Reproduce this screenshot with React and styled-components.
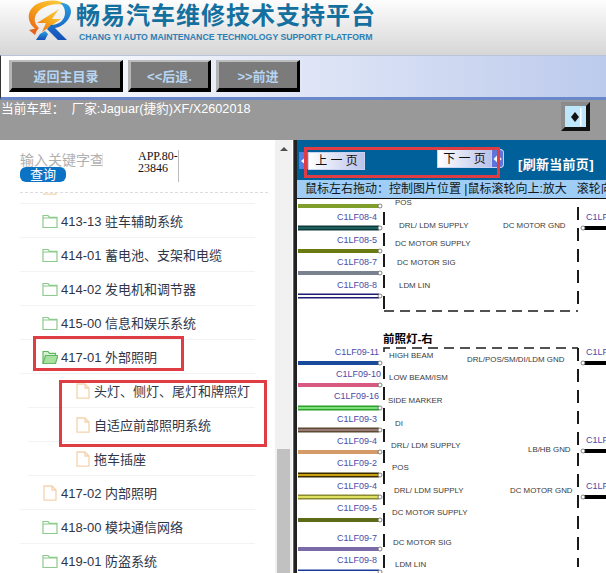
import React from "react";
import styled, { createGlobalStyle } from "styled-components";

const GlobalStyle = createGlobalStyle`
  html, body { margin: 0; padding: 0; background: #fff; }
  body { font-family: "Liberation Sans", "Noto Sans CJK SC", sans-serif; }
`;

const Page = styled.div`
  position: relative;
  width: 606px;
  height: 573px;
  overflow: hidden;
  display: flex;
  flex-direction: column;
`;

const Header = styled.header`
  height: 55px;
  box-sizing: border-box;
  display: flex;
  gap: 4px;
  padding: 0 0 0 24px;
  background: linear-gradient(#fdfdfd, #d6d6d6);
`;

const TitleBlock = styled.div`
  display: flex;
  flex-direction: column;
  padding-top: 1px;
`;

const Title = styled.div`
  color: #14709f;
  font-size: 24px;
  line-height: 30px;
  font-weight: 700;
  letter-spacing: 1px;
  white-space: nowrap;
`;

const SubTitle = styled.div`
  margin: 0 0 0 3px;
  color: #2c7fb5;
  font-size: 8.7px;
  line-height: 12px;
  font-weight: 700;
  white-space: nowrap;
`;

const Toolbar = styled.nav`
  height: 45px;
  box-sizing: border-box;
  display: flex;
  gap: 5px;
  padding: 4px 0 0 8px;
  background: linear-gradient(90deg, #fff 0%, #e6ebf8 40%, #bccaec 100%);
  border-left: 1px solid #333;
  border-top: 1px solid #b9c4dc;
  border-bottom: 3px solid #6a87c9;
`;

const ToolButton = styled.button`
  width: ${(p) => p.$w}px;
  height: 32px;
  box-sizing: border-box;
  padding: 0;
  background: #7b7b7b;
  border-style: solid;
  border-width: 2px 3px 4px 3px;
  border-color: #bdbdbd #000 #000 #b5b5b5;
  color: #b7d5f2;
  font-family: inherit;
  font-size: 13px;
  font-weight: 700;
`;

const ModelBar = styled.div`
  height: 40px;
  box-sizing: border-box;
  display: flex;
  justify-content: space-between;
  align-items: flex-start;
  padding: 2px 16px 0 1px;
  background: #999;
  color: #fff;
  font-size: 12.7px;
  line-height: 14px;
  white-space: pre;
`;

const ToggleButton = styled.button`
  width: 29px;
  height: 29px;
  box-sizing: border-box;
  display: flex;
  align-items: center;
  justify-content: center;
  padding: 0;
  background: #bde6fa;
  border-style: solid;
  border-width: 4px;
  border-color: #8b8b8b #111 #111 #8b8b8b;
`;

const Main = styled.div`
  flex: 1;
  min-height: 0;
  display: flex;
`;

const Sidebar = styled.aside`
  width: 275px;
  background: #fff;
  display: flex;
  flex-direction: column;
`;

const SearchRow = styled.div`
  height: 52px;
  box-sizing: border-box;
  flex: none;
  display: flex;
  padding: 10px 0 0 20px;
`;

const SearchColumn = styled.div`
  width: 83px;
  display: flex;
  flex-direction: column;
  padding-top: 3px;
`;

const SearchInput = styled.input`
  width: 83px;
  height: 14px;
  box-sizing: border-box;
  padding: 0;
  border: 0;
  border-right: 1px solid #e6e6e6;
  outline: none;
  font-family: inherit;
  font-size: 14px;
  line-height: 14px;
  &::placeholder { color: #b0b0b0; opacity: 1; }
`;

const SearchButton = styled.button`
  width: 46px;
  height: 15px;
  padding: 0;
  border: 0;
  border-radius: 6px;
  background: #0b72c4;
  color: #fff;
  font-family: inherit;
  font-size: 13px;
  line-height: 15px;
`;

const AppCode = styled.div`
  width: 40px;
  height: 32px;
  margin-left: 35px;
  border-right: 1px solid #bbb;
  color: #111;
  font-family: "Liberation Serif", serif;
  font-size: 12px;
  line-height: 12px;
`;

const TreeFrame = styled.div`
  flex: 1;
  min-height: 0;
  overflow: hidden;
  border-top: 1px dashed #dcdcdc;
  margin-left: 20px;
  margin-right: 7px;
`;

const Tree = styled.ul`
  list-style: none;
  margin: -23px 0 0 0;
  padding: 0;
  width: 235px;
`;

const TreeRow = styled.li`
  height: 34px;
  box-sizing: border-box;
  display: flex;
  align-items: center;
  gap: 3px;
  margin-left: ${(p) => (p.$child ? 8 : 0)}px;
  padding-left: ${(p) => (p.$child ? 47 : 22)}px;
  border-bottom: 1px solid #f2f3f4;
  color: #2f3648;
  font-size: 13px;
  white-space: pre;
`;

const TreeGlyph = styled.svg`
  width: 16px;
  height: 16px;
  flex: none;
`;

const Scrollbar = styled.div`
  width: 17px;
  background: #f1f1f1;
  display: flex;
  flex-direction: column;
  align-items: center;
`;

const ScrollArrow = styled.div`
  margin-top: 7px;
  width: 0;
  height: 0;
  border-left: 4px solid transparent;
  border-right: 4px solid transparent;
  border-bottom: 4px solid #505050;
`;

const ScrollThumb = styled.div`
  margin-top: auto;
  width: 13px;
  height: 124px;
  background: #c1c1c1;
`;

const Splitter = styled.div`
  width: 4px;
  margin-left: 1px;
  background: #222;
  border-left: 1px solid #666;
  box-sizing: border-box;
`;

const Viewer = styled.section`
  flex: 1;
  min-width: 0;
  display: flex;
  flex-direction: column;
`;

const PagerBar = styled.div`
  position: relative;
  height: 40px;
  flex: none;
  display: flex;
  align-items: flex-start;
  background: #00609a;
`;

const PagerArrow = styled.div`
  width: 9px;
  height: 17px;
  margin: 12px 0 0 2px;
  display: flex;
  align-items: center;
  justify-content: center;
  background: #4f7fe0;
`;

const PagerArrowGlyph = styled.div`
  width: 0;
  height: 0;
  border-top: 4px solid transparent;
  border-bottom: 4px solid transparent;
  border-right: 5px solid #fff;
`;

const PagerButton = styled.button`
  width: ${(p) => p.$w}px;
  height: ${(p) => p.$h}px;
  margin: ${(p) => p.$m};
  padding: 0;
  border: 1px solid #c8d4f2;
  background: linear-gradient(90deg, #fff, #b9c2ea);
  color: #111;
  font-family: inherit;
  font-size: 12px;
  line-height: 14px;
  white-space: pre;
`;

const PagerEnd = styled.div`
  width: 12px;
  height: 19px;
  margin-top: 9px;
  box-sizing: border-box;
  border: 1px solid #c8d4f2;
  border-left: 0;
  border-radius: 0 4px 4px 0;
  display: flex;
  align-items: center;
  justify-content: center;
  background: #5f74d8;
  color: #fff;
  font-size: 8px;
`;

const RefreshLink = styled.div`
  margin: 17px 0 0 14px;
  color: #fff;
  font-size: 13px;
  line-height: 16px;
  font-weight: 700;
  letter-spacing: 0.3px;
  white-space: nowrap;
`;

const HintBar = styled.div`
  height: 18px;
  flex: none;
  box-sizing: border-box;
  padding: 1px 0 0 8px;
  overflow: hidden;
  background: #9fcdf5;
  color: #101820;
  font-size: 12px;
  line-height: 16px;
  white-space: pre;
`;

const Diagram = styled.svg`
  display: block;
  flex: 1;
  min-height: 0;
  width: 310px;
  background: #fff;
  border-top: 1px solid #111;
`;

const PinLabel = styled.text`
  fill: #3a3a3a;
  font-size: 7.9px;
  dominant-baseline: middle;
`;

const WireLabel = styled.text`
  fill: #4b4ba6;
  font-size: 9px;
  dominant-baseline: middle;
`;

const SectionLabel = styled.text`
  fill: #000;
  font-size: 11.5px;
  font-weight: 700;
  dominant-baseline: middle;
`;

const Callout = styled.div`
  position: absolute;
  left: ${(p) => p.$x}px;
  top: ${(p) => p.$y}px;
  width: ${(p) => p.$w}px;
  height: ${(p) => p.$h}px;
  box-sizing: border-box;
  border: 3px solid #e03c44;
  pointer-events: none;
`;

const Logo = () => (
  <svg width="48" height="42" viewBox="24 0 48 42" style={{ flex: "none" }}>
    <defs>
      <linearGradient id="ring" x1="0" y1="1" x2="1" y2="0">
        <stop offset="0" stopColor="#e8641a" />
        <stop offset="0.5" stopColor="#f7a81c" />
        <stop offset="1" stopColor="#fbd24a" />
      </linearGradient>
      <linearGradient id="rblue" x1="0" y1="0" x2="0" y2="1">
        <stop offset="0" stopColor="#2a9fe0" />
        <stop offset="1" stopColor="#1450b8" />
      </linearGradient>
    </defs>
    <path d="M37 30C27 24 25 11 37 4C47-1 61-1 67 6C59 3 48 4 41 9C33 15 33 23 39 28Z" fill="url(#ring)" />
    <path d="M29 30L38 28L35 35Z" fill="#e8641a" />
    <path d="M59 9L37 23L46 23L42 32L61 19L52 19Z" fill="url(#ring)" />
    <path d="M60 3C69 2 73 9 70 16C67 23 61 27 55 28L67 40L58 40L47 29L51 25C59 25 65 20 65 13C65 8 63 5 60 3Z" fill="url(#rblue)" />
    <path d="M45 31L48 34L45 40L36 40L40 34Z" fill="url(#rblue)" />
  </svg>
);

const FolderIcon = () => (
  <TreeGlyph viewBox="0 0 16 16">
    <path d="M1 14.5V2.5h5l1.5 1.8h7.5v10.2Z M1 5h14" fill="none" stroke="#8ccb8c" strokeWidth="1.2" />
  </TreeGlyph>
);

const OpenFolderIcon = () => (
  <TreeGlyph viewBox="0 0 16 16">
    <path d="M1 14.5V2.5h5l1.5 1.8h6v2.2" fill="#d8f0d4" stroke="#62b862" strokeWidth="1.2" />
    <path d="M1 14.5L3.5 6.5H16L13.5 14.5Z" fill="#a8e0a0" stroke="#62b862" strokeWidth="1.2" />
  </TreeGlyph>
);

const FileIcon = () => (
  <TreeGlyph viewBox="0 0 16 16">
    <path d="M2 1h8l4 4v10.2H2Z M10 1v4h4" fill="none" stroke="#f5d3ae" strokeWidth="1.3" />
  </TreeGlyph>
);

const treeItems = [
  { icon: "file", text: "" },
  { icon: "folder", text: "413-13 驻车辅助系统" },
  { icon: "folder", text: "414-01 蓄电池、支架和电缆" },
  { icon: "folder", text: "414-02 发电机和调节器" },
  { icon: "folder", text: "415-00 信息和娱乐系统" },
  { icon: "open", text: "417-01 外部照明" },
  { icon: "file", text: "头灯、侧灯、尾灯和牌照灯", child: true },
  { icon: "file", text: "自适应前部照明系统", child: true },
  { icon: "file", text: "拖车插座", child: true },
  { icon: "file", text: "417-02 内部照明" },
  { icon: "folder", text: "418-00 模块通信网络" },
  { icon: "folder", text: "419-01 防盗系统" },
];

const icons = { file: FileIcon, folder: FolderIcon, open: OpenFolderIcon };

// page coordinates, the diagram's viewBox starts at 296,199
const wires = [
  { y: 206, c: "#7f9f2a" },
  { y: 228, c: "#1d5f5f", edge: "#0f3a3a" },
  { y: 251, c: "#6b7a10" },
  { y: 273, c: "#7a8290" },
  { y: 296, c: "#fff", edge: "#1c1c70" },
  { y: 363, c: "#1a4a9a" },
  { y: 385, c: "#d85a80" },
  { y: 408, c: "#7de07d", edge: "#2aa02a" },
  { y: 430, c: "#9a7a78", edge: "#5a4a30" },
  { y: 452, c: "#d49a68" },
  { y: 475, c: "#c8a010", edge: "#3a2a00" },
  { y: 497, c: "#e0e060", edge: "#8a8a30" },
  { y: 520, c: "#5f6a18" },
  { y: 549, c: "#7a6aa8" },
  { y: 572, c: "#fff", edge: "#1a3a9a" },
];

const wireLabels = [
  ["C1LF08-4", 376, 218], ["C1LF08-5", 376, 241], ["C1LF08-7", 376, 263], ["C1LF08-8", 376, 286],
  ["C1LF09-11", 378, 353], ["C1LF09-10", 380, 375], ["C1LF09-16", 378, 397], ["C1LF09-3", 376, 420],
  ["C1LF09-4", 376, 442], ["C1LF09-2", 376, 464], ["C1LF09-4", 376, 487], ["C1LF09-5", 376, 509],
  ["C1LF09-7", 376, 539], ["C1LF09-8", 376, 561],
];

const pinLabels = [
  ["POS", 394, 203], ["DRL/ LDM SUPPLY", 398, 226], ["DC MOTOR SUPPLY", 394, 244], ["DC MOTOR SIG", 396, 263],
  ["LDM LIN", 398, 286], ["DC MOTOR GND", 502, 226],
  ["HIGH BEAM", 388, 356], ["LOW BEAM/ISM", 388, 378], ["SIDE MARKER", 387, 401], ["DI", 394, 424],
  ["DRL/ LDM SUPPLY", 390, 446], ["POS", 391, 468], ["DRL/ LDM SUPPLY", 393, 491], ["DC MOTOR SUPPLY", 391, 513],
  ["DC MOTOR SIG", 392, 543], ["LDM LIN", 394, 565], ["DRL/POS/SM/DI/LDM GND", 466, 360],
  ["LB/HB GND", 527, 450], ["DC MOTOR GND", 509, 491],
];

const groundWires = [228, 363, 451, 497];
const dash = { stroke: "#1a1a1a", strokeWidth: 2, strokeDasharray: "13 8", fill: "none" };
const hDash = { stroke: "#1a1a1a", strokeWidth: 1.5, strokeDasharray: "10 6", fill: "none" };

const WiringDiagram = () => (
  <Diagram viewBox="296 199 310 374" preserveAspectRatio="xMinYMin slice">
    {wires.map((w) => (
      <g key={w.y}>
        {w.edge && <line x1="297" x2="378" y1={w.y} y2={w.y} stroke={w.edge} strokeWidth="5" />}
        <line x1="297" x2="378" y1={w.y} y2={w.y} stroke={w.c} strokeWidth={w.edge ? 2 : 4} />
        <circle cx="379" cy={w.y} r="2" fill="#fff" stroke="#666" strokeWidth="0.8" />
      </g>
    ))}
    {wireLabels.map(([t, x, y]) => (
      <WireLabel key={t + y} x={x} y={y} textAnchor="end">{t}</WireLabel>
    ))}
    {pinLabels.map(([t, x, y]) => (
      <PinLabel key={t + y} x={x} y={y}>{t}</PinLabel>
    ))}
    <SectionLabel x="382" y="340">前照灯-右</SectionLabel>
    <path d="M383 212V310" {...dash} />
    <path d="M577 207V310" {...dash} />
    <path d="M383 311H577" {...hDash} />
    <path d="M383 352V348H577" {...hDash} />
    <path d="M383 366V573" {...dash} />
    <path d="M577 348V567" {...dash} />
    {groundWires.map((y) => (
      <g key={y}>
        <line x1="583" x2="606" y1={y} y2={y} stroke="#000" strokeWidth="4" />
        <circle cx="582" cy={y} r="2" fill="#fff" stroke="#666" strokeWidth="0.8" />
        <WireLabel x="585" y={y - 10}>C1LF09-1</WireLabel>
      </g>
    ))}
  </Diagram>
);

export default function App() {
  return (
    <Page>
      <GlobalStyle />
      <Header>
        <Logo />
        <TitleBlock>
          <Title>畅易汽车维修技术支持平台</Title>
          <SubTitle>CHANG YI AUTO MAINTENANCE TECHNOLOGY SUPPORT PLATFORM</SubTitle>
        </TitleBlock>
      </Header>
      <Toolbar>
        <ToolButton $w={114}>返回主目录</ToolButton>
        <ToolButton $w={83}>&lt;&lt;后退.</ToolButton>
        <ToolButton $w={84}>&gt;&gt;前进</ToolButton>
      </Toolbar>
      <ModelBar>
        <span>当前车型：  厂家:Jaguar(捷豹)XF/X2602018</span>
        <ToggleButton>
          <svg width="12" height="18" viewBox="0 0 12 18">
            <path d="M5 4L9 9L5 14L1 9Z" fill="#111" />
            <rect x="10" y="0" width="1.5" height="18" fill="#fff" />
          </svg>
        </ToggleButton>
      </ModelBar>
      <Main>
        <Sidebar>
          <SearchRow>
            <SearchColumn>
              <SearchInput placeholder="输入关键字查询" />
              <SearchButton>查询</SearchButton>
            </SearchColumn>
            <AppCode>APP.80-<br />23846</AppCode>
          </SearchRow>
          <TreeFrame>
            <Tree>
              {treeItems.map((item, i) => {
                const Icon = icons[item.icon];
                return (
                  <TreeRow key={i} $child={item.child}>
                    <Icon />
                    {item.text}
                  </TreeRow>
                );
              })}
            </Tree>
          </TreeFrame>
        </Sidebar>
        <Scrollbar>
          <ScrollArrow />
          <ScrollThumb />
        </Scrollbar>
        <Splitter />
        <Viewer>
          <PagerBar>
            <PagerArrow><PagerArrowGlyph /></PagerArrow>
            <PagerButton $w={57} $h={18} $m="12px 0 0 0">上 一 页</PagerButton>
            <PagerButton $w={55} $h={19} $m="9px 0 0 72px">下 一 页</PagerButton>
            <PagerEnd>◆</PagerEnd>
            <RefreshLink>[刷新当前页]</RefreshLink>
          </PagerBar>
          <HintBar>鼠标左右拖动：控制图片位置 |鼠标滚轮向上:放大   滚轮向下:缩小</HintBar>
          <WiringDiagram />
        </Viewer>
      </Main>
      <Callout $x={304} $y={147} $w={196} $h={31} />
      <Callout $x={33} $y={336} $w={151} $h={35} />
      <Callout $x={59} $y={380} $w={208} $h={67} />
    </Page>
  );
}
